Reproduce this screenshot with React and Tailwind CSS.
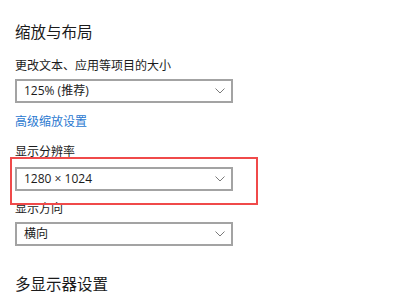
import React from "react"

function Chevron() {
  return (
    <svg width="10" height="6" viewBox="0 0 10 6" fill="none">
      <polyline points="0.5,0.5 5,5 9.5,0.5" stroke="#7a7a7a" strokeWidth="1" />
    </svg>
  )
}

function Dropdown({ value }) {
  return (
    <div className="flex h-[24px] w-[218px] items-center justify-between border-2 border-[#a3a3a3] bg-white pl-[7px] pr-[6px]">
      <span className="text-[12px] leading-[16px] text-[#1b1b1b]">{value}</span>
      <Chevron />
    </div>
  )
}

export default function App() {
  return (
    <div
      className="h-[300px] w-[400px] overflow-hidden bg-white pl-[15px] pt-[22px] text-[#1b1b1b]"
      style={{ fontFamily: '"Open Sans", "Noto Sans CJK SC", sans-serif' }}
    >
      <h2 className="text-[15.5px] leading-[20px]">缩放与布局</h2>

      <p className="mt-[16px] text-[12px] leading-[16px]">更改文本、应用等项目的大小</p>
      <div className="mt-[5px]">
        <Dropdown value="125% (推荐)" />
      </div>

      <p className="mt-[11px] text-[12px] leading-[16px] text-[#2a78d0]">高级缩放设置</p>

      <p className="mt-[14px] text-[12px] leading-[16px]">显示分辨率</p>
      <div className="relative mt-[7px] w-[218px]">
        <Dropdown value="1280 × 1024" />
        <div className="absolute -left-[5px] -top-[10px] h-[48px] w-[248px] border-2 border-[#f04a4a]" />
      </div>

      <p className="mt-[10px] text-[12px] leading-[16px]">显示方向</p>
      <div className="mt-[5px]">
        <Dropdown value="横向" />
      </div>

      <h2 className="mt-[28px] text-[15.5px] leading-[20px]">多显示器设置</h2>
    </div>
  )
}
